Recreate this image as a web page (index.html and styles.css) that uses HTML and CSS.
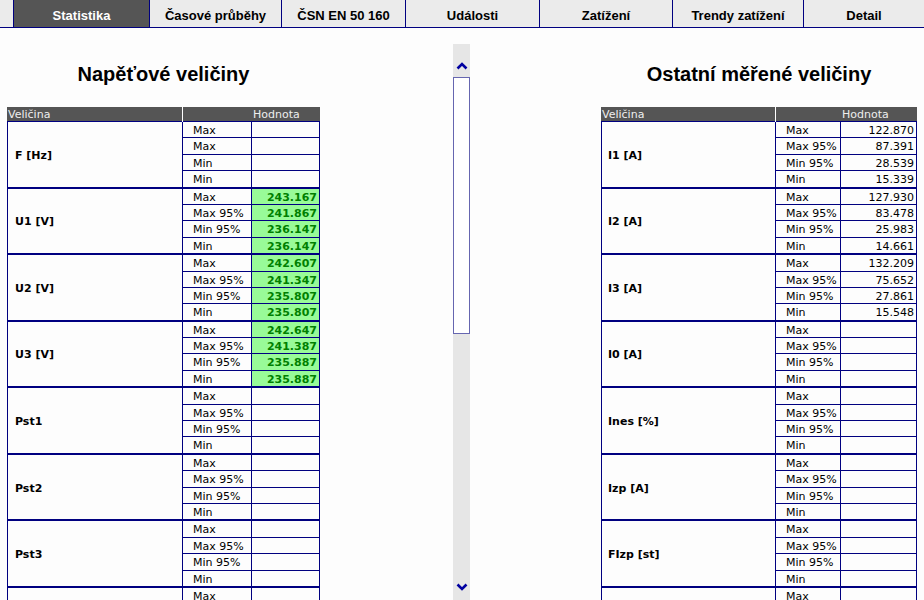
FILE: index.html
```html
<!DOCTYPE html>
<html lang="cs">
<head>
<meta charset="utf-8">
<title>Statistika</title>
<link rel="stylesheet" href="styles.css">
</head>
<body>
<nav class="tabs">
  <div class="tab-spacer"></div>
  <div class="tab tab-1 active">Statistika</div>
  <div class="tab tab-2">Časové průběhy</div>
  <div class="tab tab-3">ČSN EN 50 160</div>
  <div class="tab tab-4">Události</div>
  <div class="tab tab-5">Zatížení</div>
  <div class="tab tab-6">Trendy zatížení</div>
  <div class="tab tab-7">Detail</div>
</nav>

<main class="main">
  <section class="panel panel-left">
    <h2 class="heading">Napěťové veličiny</h2>
    <div class="table">
      <div class="thead"><span class="th-name">Veličina</span><span class="th-lbl"></span><span class="th-val">Hodnota</span></div>
      <div class="tbody">
        <div class="group">
          <div class="name">F [Hz]</div>
          <div class="lbl">Max</div><div class="val"></div>
          <div class="lbl">Max</div><div class="val"></div>
          <div class="lbl">Min</div><div class="val"></div>
          <div class="lbl">Min</div><div class="val"></div>
        </div>
        <div class="group">
          <div class="name">U1 [V]</div>
          <div class="lbl">Max</div><div class="val ok">243.167</div>
          <div class="lbl">Max 95%</div><div class="val ok">241.867</div>
          <div class="lbl">Min 95%</div><div class="val ok">236.147</div>
          <div class="lbl">Min</div><div class="val ok">236.147</div>
        </div>
        <div class="group">
          <div class="name">U2 [V]</div>
          <div class="lbl">Max</div><div class="val ok">242.607</div>
          <div class="lbl">Max 95%</div><div class="val ok">241.347</div>
          <div class="lbl">Min 95%</div><div class="val ok">235.807</div>
          <div class="lbl">Min</div><div class="val ok">235.807</div>
        </div>
        <div class="group">
          <div class="name">U3 [V]</div>
          <div class="lbl">Max</div><div class="val ok">242.647</div>
          <div class="lbl">Max 95%</div><div class="val ok">241.387</div>
          <div class="lbl">Min 95%</div><div class="val ok">235.887</div>
          <div class="lbl">Min</div><div class="val ok">235.887</div>
        </div>
        <div class="group">
          <div class="name">Pst1</div>
          <div class="lbl">Max</div><div class="val"></div>
          <div class="lbl">Max 95%</div><div class="val"></div>
          <div class="lbl">Min 95%</div><div class="val"></div>
          <div class="lbl">Min</div><div class="val"></div>
        </div>
        <div class="group">
          <div class="name">Pst2</div>
          <div class="lbl">Max</div><div class="val"></div>
          <div class="lbl">Max 95%</div><div class="val"></div>
          <div class="lbl">Min 95%</div><div class="val"></div>
          <div class="lbl">Min</div><div class="val"></div>
        </div>
        <div class="group">
          <div class="name">Pst3</div>
          <div class="lbl">Max</div><div class="val"></div>
          <div class="lbl">Max 95%</div><div class="val"></div>
          <div class="lbl">Min 95%</div><div class="val"></div>
          <div class="lbl">Min</div><div class="val"></div>
        </div>
        <div class="group">
          <div class="name">Plt1</div>
          <div class="lbl">Max</div><div class="val"></div>
          <div class="lbl">Max 95%</div><div class="val"></div>
          <div class="lbl">Min 95%</div><div class="val"></div>
          <div class="lbl">Min</div><div class="val"></div>
        </div>
      </div>
    </div>
  </section>

  <div class="scrollbar">
    <div class="sb-up">
      <svg width="12" height="9" viewBox="0 0 12 9"><polyline points="1.5,7.5 6,3 10.5,7.5" fill="none" stroke="#0000a0" stroke-width="2.6"/></svg>
    </div>
    <div class="sb-thumb"></div>
    <div class="sb-track"></div>
    <div class="sb-down">
      <svg width="12" height="9" viewBox="0 0 12 9"><polyline points="1.5,1.5 6,6 10.5,1.5" fill="none" stroke="#0000a0" stroke-width="2.6"/></svg>
    </div>
  </div>

  <section class="panel panel-right">
    <h2 class="heading">Ostatní měřené veličiny</h2>
    <div class="table">
      <div class="thead"><span class="th-name">Veličina</span><span class="th-lbl"></span><span class="th-val">Hodnota</span></div>
      <div class="tbody">
        <div class="group">
          <div class="name">I1 [A]</div>
          <div class="lbl">Max</div><div class="val">122.870</div>
          <div class="lbl">Max 95%</div><div class="val">87.391</div>
          <div class="lbl">Min 95%</div><div class="val">28.539</div>
          <div class="lbl">Min</div><div class="val">15.339</div>
        </div>
        <div class="group">
          <div class="name">I2 [A]</div>
          <div class="lbl">Max</div><div class="val">127.930</div>
          <div class="lbl">Max 95%</div><div class="val">83.478</div>
          <div class="lbl">Min 95%</div><div class="val">25.983</div>
          <div class="lbl">Min</div><div class="val">14.661</div>
        </div>
        <div class="group">
          <div class="name">I3 [A]</div>
          <div class="lbl">Max</div><div class="val">132.209</div>
          <div class="lbl">Max 95%</div><div class="val">75.652</div>
          <div class="lbl">Min 95%</div><div class="val">27.861</div>
          <div class="lbl">Min</div><div class="val">15.548</div>
        </div>
        <div class="group">
          <div class="name">I0 [A]</div>
          <div class="lbl">Max</div><div class="val"></div>
          <div class="lbl">Max 95%</div><div class="val"></div>
          <div class="lbl">Min 95%</div><div class="val"></div>
          <div class="lbl">Min</div><div class="val"></div>
        </div>
        <div class="group">
          <div class="name">Ines [%]</div>
          <div class="lbl">Max</div><div class="val"></div>
          <div class="lbl">Max 95%</div><div class="val"></div>
          <div class="lbl">Min 95%</div><div class="val"></div>
          <div class="lbl">Min</div><div class="val"></div>
        </div>
        <div class="group">
          <div class="name">Izp [A]</div>
          <div class="lbl">Max</div><div class="val"></div>
          <div class="lbl">Max 95%</div><div class="val"></div>
          <div class="lbl">Min 95%</div><div class="val"></div>
          <div class="lbl">Min</div><div class="val"></div>
        </div>
        <div class="group">
          <div class="name">FIzp [st]</div>
          <div class="lbl">Max</div><div class="val"></div>
          <div class="lbl">Max 95%</div><div class="val"></div>
          <div class="lbl">Min 95%</div><div class="val"></div>
          <div class="lbl">Min</div><div class="val"></div>
        </div>
        <div class="group">
          <div class="name">THDU [%]</div>
          <div class="lbl">Max</div><div class="val"></div>
          <div class="lbl">Max 95%</div><div class="val"></div>
          <div class="lbl">Min 95%</div><div class="val"></div>
          <div class="lbl">Min</div><div class="val"></div>
        </div>
      </div>
    </div>
  </section>
</main>
</body>
</html>
```

FILE: styles.css
```css
html, body {
  margin: 0;
  padding: 0;
  overflow: hidden;
  height: 600px;
}
body {
  background: #fdfdfd;
  color: #000;
  font-family: "DejaVu Sans", Verdana, sans-serif;
  font-size: 11px;
}

/* ---------- tabs ---------- */
.tabs {
  display: flex;
  height: 27px;
  background: #ebebeb;
  border-bottom: 1px solid #000080;
}
.tab-spacer {
  width: 13px;
  flex: none;
}
.tab {
  flex: none;
  box-sizing: border-box;
  border-left: 1px solid #000080;
  font-family: "Liberation Sans", Arial, sans-serif;
  font-weight: bold;
  font-size: 13px;
  line-height: 15px;
  padding-top: 8px;
  text-align: center;
  color: #000;
}
.tab.active {
  background: #555555;
  color: #fff;
}
.tab-1 { width: 136px; }
.tab-2 { width: 132px; }
.tab-3 { width: 124px; }
.tab-4 { width: 134px; }
.tab-5 { width: 133px; }
.tab-6 { width: 131px; }
.tab-7 { width: 121px; }

/* ---------- main layout ---------- */
.main {
  display: flex;
  align-items: flex-start;
  padding: 0 7px;
}
.panel-left {
  width: 313px;
  flex: none;
}
.panel-right {
  width: 316px;
  flex: none;
}
.scrollbar {
  flex: none;
  width: 17px;
  height: 556px;
  margin: 16px 131px 0 133px;
  background: #e6e6e6;
  display: flex;
  flex-direction: column;
  align-items: stretch;
}
.sb-up {
  height: 33px;
  box-sizing: border-box;
  padding-top: 17px;
  display: flex;
  justify-content: center;
  align-items: flex-start;
}
.sb-thumb {
  height: 257px;
  box-sizing: border-box;
  border: 1px solid #6666b0;
  background: #fff;
}
.sb-track {
  flex: 1;
}
.sb-down {
  height: 20px;
  box-sizing: border-box;
  padding-top: 3px;
  display: flex;
  justify-content: center;
  align-items: flex-start;
}
.sb-up svg, .sb-down svg { display: block; }

/* ---------- headings ---------- */
.heading {
  margin: 34px 0 21px;
  font-family: "Liberation Sans", Arial, sans-serif;
  font-weight: bold;
  font-size: 20px;
  line-height: 24px;
  text-align: center;
  color: #000;
}

/* ---------- tables ---------- */
.thead {
  display: grid;
  height: 14px;
  background: #555555;
  color: #eeeeee;
  line-height: 14px;
}
.panel-left .thead { grid-template-columns: 176px 69px 68px; }
.panel-right .thead { grid-template-columns: 175px 65px 76px; }
.th-name {
  border-right: 1px solid #fff;
  padding-left: 1px;
  padding-top: 1px;
}
.th-val {
  padding-left: 1px;
  padding-top: 1px;
  white-space: nowrap;
}
.tbody {
  border-top: 1px solid #000080;
}
.group {
  display: grid;
  border-left: 1px solid #000080;
  border-right: 1px solid #000080;
  border-bottom: 2px solid #000080;
}
.panel-left .group { grid-template-columns: 175px 69px 67px; }
.panel-right .group { grid-template-columns: 174px 65px 75px; }

.name {
  grid-row: 1 / span 4;
  grid-column: 1;
  border-right: 1px solid #000080;
  display: flex;
  align-items: center;
  padding-left: 7px;
  padding-top: 2px;
  font-weight: bold;
}
.panel-right .name { padding-left: 6px; }
.lbl, .val {
  height: 15.4px;
  line-height: 17px;
  border-bottom: 1px solid #000080;
  white-space: nowrap;
}
.lbl {
  border-right: 1px solid #000080;
  padding-left: 10px;
}
.val {
  text-align: right;
  padding-right: 2px;
}
.group > .lbl:nth-last-child(2),
.group > .val:last-child {
  border-bottom: none;
}
.val.ok {
  background: #98fb98;
  color: #008000;
  font-weight: bold;
}
```
